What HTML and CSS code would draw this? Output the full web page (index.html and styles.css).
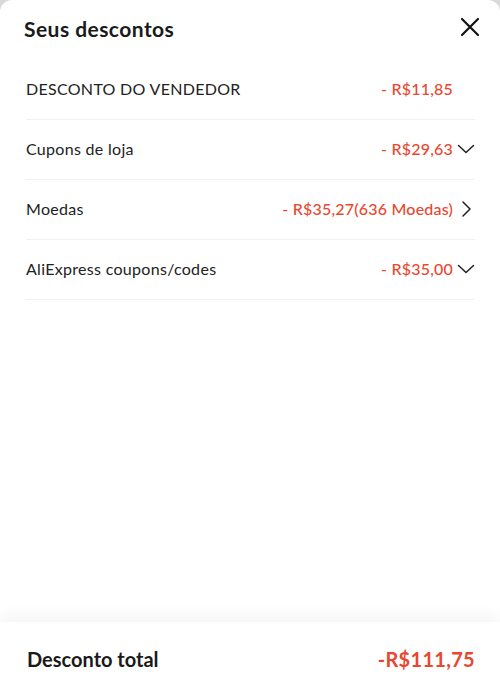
FILE: index.html
```html
<!DOCTYPE html>
<html lang="pt">
<head>
<meta charset="utf-8">
<link rel="stylesheet" href="styles.css">
</head>
<body>
<div class="sheet">
  <div class="header">
    <h1 class="title">Seus descontos</h1>
    <svg class="close" width="20" height="20" viewBox="0 0 20 20"><path d="M2 2 L18 18 M18 2 L2 18" stroke="#111" stroke-width="2.2" stroke-linecap="round" fill="none"/></svg>
  </div>
  <div class="list">
    <div class="row">
      <span class="label">DESCONTO DO VENDEDOR</span>
      <span class="value">- R$11,85</span>
      <span class="icon"></span>
    </div>
    <div class="row">
      <span class="label">Cupons de loja</span>
      <span class="value">- R$29,63</span>
      <svg class="icon" width="18" height="18" viewBox="0 0 18 18"><path d="M1.5 5.5 L9 12.5 L16.5 5.5" stroke="#222" stroke-width="1.5" fill="none" stroke-linecap="round" stroke-linejoin="round"/></svg>
    </div>
    <div class="row">
      <span class="label">Moedas</span>
      <span class="value">- R$35,27(636 Moedas)</span>
      <svg class="icon" width="18" height="18" viewBox="0 0 18 18"><path d="M6 2 L13 9 L6 16" stroke="#222" stroke-width="1.5" fill="none" stroke-linecap="round" stroke-linejoin="round"/></svg>
    </div>
    <div class="row">
      <span class="label">AliExpress coupons/codes</span>
      <span class="value">- R$35,00</span>
      <svg class="icon" width="18" height="18" viewBox="0 0 18 18"><path d="M1.5 5.5 L9 12.5 L16.5 5.5" stroke="#222" stroke-width="1.5" fill="none" stroke-linecap="round" stroke-linejoin="round"/></svg>
    </div>
  </div>
  <div class="footer">
    <span class="total-label">Desconto total</span>
    <span class="total-value">-R$111,75</span>
  </div>
</div>
</body>
</html>
```
FILE: styles.css
```css
html, body {
  margin: 0;
  padding: 0;
  background: #d9d9d9;
}
body {
  font-family: Lato, "Open Sans", sans-serif;
  color: #222;
}
.sheet {
  width: 500px;
  height: 700px;
  background: #fff;
  border-radius: 12px 12px 0 0;
  display: flex;
  flex-direction: column;
  overflow: hidden;
}
.header {
  display: flex;
  align-items: center;
  justify-content: space-between;
  height: 60px;
  padding: 0 20px 0 24px;
  box-sizing: border-box;
}
.title {
  margin: -3px 0 0;
  font-size: 21px;
  font-weight: 700;
  color: #1a1a1a;
  letter-spacing: 0.45px;
}
.close {
  margin-top: -6px;
}
.list {
  flex: 1;
  padding: 0 25px 0 26px;
}
.row {
  display: flex;
  align-items: center;
  height: 60px;
  border-bottom: 1px solid #f1f1f1;
  box-sizing: border-box;
  font-size: 16px;
  padding-bottom: 2px;
}
.label {
  flex: 1;
  color: #222;
  letter-spacing: 0.3px;
}
.value {
  color: #e9472f;
  font-weight: 500;
  letter-spacing: 0.2px;
}
.icon {
  width: 18px;
  height: 18px;
  margin-left: 4px;
  flex: none;
}
.footer {
  height: 78px;
  flex: none;
  display: flex;
  align-items: center;
  justify-content: space-between;
  padding: 0 25px 5px 27px;
  box-sizing: border-box;
  box-shadow: 0 -8px 12px rgba(0,0,0,0.035);
  background: #fff;
}
.total-label {
  font-size: 20px;
  font-weight: 700;
  color: #1a1a1a;
}
.total-value {
  font-size: 20px;
  font-weight: 700;
  color: #e9472f;
  letter-spacing: 0.3px;
}
```
